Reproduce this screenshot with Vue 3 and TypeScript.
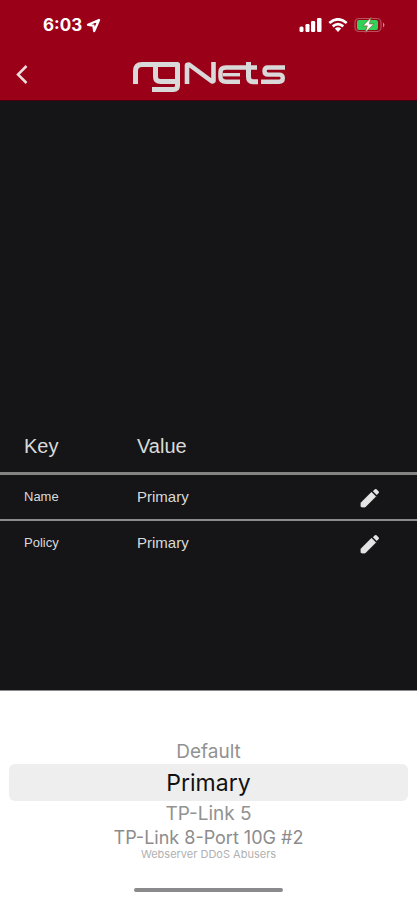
<script setup lang="ts">
import { ref } from 'vue'

interface Row {
  key: string
  value: string
}

const rows = ref<Row[]>([
  { key: 'Name', value: 'Primary' },
  { key: 'Policy', value: 'Primary' },
])

const policies: string[] = [
  'Default',
  'Primary',
  'TP-Link 5',
  'TP-Link 8-Port 10G #2',
  'Webserver DDoS Abusers',
]
const selected = ref<string>('Primary')

// Distance from the resting selection decides how faded a row looks.
const tiers: string[] = ['near', 'current', 'near', 'far', 'edge']
</script>

<template>
  <div class="screen">
    <header class="top">
      <div class="status">
        <div class="clock">
          <span>6:03</span>
          <svg width="15" height="15" viewBox="0 0 15 15" aria-hidden="true">
            <path d="M13 2 L2 6.800 L7.400 7.600 L8.200 13 Z" fill="none" stroke="#fff" stroke-width="2.300" stroke-linejoin="round" />
          </svg>
        </div>
        <div class="signals">
          <svg width="23" height="14" viewBox="0 0 23 14" aria-label="Signal">
            <g fill="#fff">
              <rect x="0.500" y="8.500" width="4" height="5.500" rx="1.500" />
              <rect x="6.500" y="6" width="4" height="8" rx="1.200" />
              <rect x="12" y="3" width="4.200" height="11" rx="1.200" />
              <rect x="18" y="0" width="4.500" height="14" rx="1.200" />
            </g>
          </svg>
          <svg width="20" height="14" viewBox="0 0 20 14" aria-label="Wi-Fi">
            <g fill="none" stroke="#fff" stroke-width="2.700">
              <path d="M1.300 5 Q10 -2.400 18.700 5" />
              <path d="M4.700 8.400 Q10 4 15.300 8.400" />
            </g>
            <path d="M6.800 10.400 Q10 8 13.200 10.400 L10 14 Z" fill="#fff" />
          </svg>
          <svg width="32" height="16" viewBox="0 0 32 16" aria-label="Battery charging">
            <rect x="1" y="1.500" width="26" height="13" rx="4" fill="none" stroke="#b9505b" stroke-width="1.200" />
            <path d="M29 5.500 Q32 8 29 10.500 Z" fill="#d08a90" />
            <path d="M5 3 H22 Q24 3 24 5 V11 Q24 13 22 13 H5 Q3 13 3 11 V5 Q3 3 5 3 Z" fill="#30d158" />
            <path d="M17 0.500 L8.800 8.900 H13.300 L11.200 15.500 L20 6.900 H15.500 Z" fill="#fff" stroke="#7d6b3c" stroke-width="0.800" />
          </svg>
        </div>
      </div>
      <nav class="bar">
        <button class="back" type="button" aria-label="Back">
          <svg width="12" height="20" viewBox="0 0 12 20">
            <path d="M10.500 1 L2 9.500 L10.500 18" fill="none" stroke="#e8dcdc" stroke-width="2.500" />
          </svg>
        </button>
        <svg class="logo" width="154" height="32" viewBox="0 0 154 32" role="img" aria-label="rgNets">
          <g fill="none" stroke="#d9d9d9" stroke-width="5" stroke-linejoin="round">
            <path d="M3.500 23 V10 Q3.500 3.500 10 3.500 H45.500 V24.500 Q45.500 28.500 41.500 28.500 H20" />
            <path d="M23.500 3.500 V15.500 Q23.500 20.500 28.500 20.500 H45.500" />
            <path d="M55 23 V4 L57 3.500 L80 20.500 L81.500 20 V1" stroke-width="4.600" />
            <path d="M108 20.700 H94 Q88.500 20.700 88.500 16 V11 Q88.500 6.500 94 6.500 H125" stroke-width="4.500" />
            <path d="M91 13.700 H108" stroke-width="3.400" />
            <path d="M116.500 1 V16 Q116.500 20.700 121 20.700 H126" stroke-width="5" />
            <path d="M153 6.500 H136 Q132.500 6.500 132.500 10 Q132.500 13.600 136 13.600 H147 Q150.800 13.600 150.800 17 Q150.800 20.700 147 20.700 H129" stroke-width="4.400" />
          </g>
        </svg>
      </nav>
    </header>

    <main class="content">
      <table class="grid">
        <thead>
          <tr>
            <th scope="col" class="key">Key</th>
            <th scope="col">Value</th>
            <th class="action"></th>
          </tr>
        </thead>
        <tbody>
          <tr v-for="row in rows" :key="row.key">
            <th scope="row" class="key">{{ row.key }}</th>
            <td>{{ row.value }}</td>
            <td class="action">
              <button class="edit" type="button" :aria-label="'Edit ' + row.key">
                <svg width="20" height="20" viewBox="0 0 20 20">
                  <path d="M1 14.800 V18.400 L1.600 19 H5.200 L15.700 8.500 L11.500 4.300 Z" fill="#e4e4e4" stroke="#e4e4e4" stroke-width="0.800" stroke-linejoin="round" />
                  <path d="M12.900 3.300 L14.900 1.300 Q15.700 0.600 16.500 1.300 L18.700 3.500 Q19.400 4.300 18.700 5.100 L16.700 7.100 Z" fill="#e4e4e4" />
                </svg>
              </button>
            </td>
          </tr>
        </tbody>
      </table>
    </main>

    <section class="sheet">
      <div class="wheel" role="radiogroup" aria-label="Policy">
        <label v-for="(name, i) in policies" :key="name" class="option" :class="tiers[i]">
          <input v-model="selected" type="radio" name="policy" :value="name" />
          <span>{{ name }}</span>
        </label>
      </div>
      <div class="home"></div>
    </section>
  </div>
</template>

<style>
body {
  margin: 0;
  background: #151517;
}
</style>

<style scoped>
.screen {
  display: flex;
  flex-direction: column;
  min-height: 100vh;
  background: #151517;
  font-family: "Liberation Sans", Arial, sans-serif;
}
button {
  display: inline-flex;
  padding: 0;
  border: 0;
  background: none;
  cursor: pointer;
}
.top {
  background: #9b0019;
  border-bottom: 1px solid #4a000c;
}
.status {
  display: flex;
  justify-content: space-between;
  align-items: center;
  height: 50px;
  padding: 0 31px 0 43px;
}
.clock {
  display: flex;
  align-items: center;
  gap: 4px;
  color: #fff;
  font: 700 17px/20px Inter, sans-serif;
}
.signals {
  display: flex;
  align-items: center;
  gap: 6px;
}
.bar {
  display: grid;
  grid-template-columns: 1fr auto 1fr;
  align-items: center;
  height: 50px;
  padding: 0 16px;
}
.back {
  justify-self: start;
}
.logo {
  margin-top: 4px;
}
.content {
  flex: 1;
  display: flex;
  flex-direction: column;
  justify-content: flex-end;
  padding-bottom: 125px;
}
.grid {
  width: 100%;
  border-collapse: separate;
  border-spacing: 0;
  table-layout: fixed;
  color: #dadada;
}
.grid th,
.grid td {
  height: 44px;
  padding: 0;
  font-size: 15px;
  font-weight: 400;
  line-height: 20px;
  text-align: left;
}
.grid thead th {
  height: 52px;
  border-bottom: 3px solid #848484;
  font-size: 20px;
}
.grid tbody tr:not(:last-child) > * {
  border-bottom: 2px solid #8c8c8e;
}
.grid .key {
  width: 113px;
  padding-left: 24px;
}
.grid tbody .key {
  font-size: 13px;
}
.grid .action {
  width: 57px;
}
.edit {
  vertical-align: middle;
}
.sheet {
  display: flex;
  flex-direction: column;
  align-items: center;
  gap: 28px;
  padding: 48px 9px 8px;
  border-top: 1px solid #8a8a8a;
  background: #fff;
}
.wheel {
  display: flex;
  flex-direction: column;
  align-self: stretch;
  font-family: Inter, sans-serif;
}
.option {
  display: flex;
  align-items: center;
  justify-content: center;
  height: 25px;
  color: #929292;
  font-size: 19px;
  line-height: 24px;
  cursor: pointer;
}
.option input {
  appearance: none;
  width: 0;
  height: 0;
  margin: 0;
}
.option.current {
  height: 37px;
  border-radius: 6px;
  background: #eee;
  color: #111;
  font-size: 23px;
}
.option.far {
  height: 23px;
  font-size: 18px;
  line-height: 22px;
  color: #8c8c8c;
}
.option.edge {
  height: 11px;
  font-size: 11px;
  line-height: 11px;
  color: #b0b0b0;
}
.home {
  width: 149px;
  height: 4px;
  border-radius: 2px;
  background: #8a8a8c;
}
</style>
